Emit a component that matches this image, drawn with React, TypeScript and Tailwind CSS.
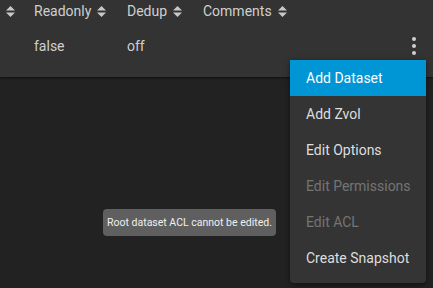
function SortIcon() {
  return (
    <svg className="h-[11px] w-[9px] shrink-0" viewBox="0 0 9 11" fill="#c8c8c8" aria-hidden="true">
      <path d="M4.5 0L9 4.5H0z" />
      <path d="M4.5 11L0 6.5h9z" />
    </svg>
  )
}

const menuItems = [
  { label: 'Add Dataset', active: true },
  { label: 'Add Zvol' },
  { label: 'Edit Options' },
  { label: 'Edit Permissions', disabled: true },
  { label: 'Edit ACL', disabled: true },
  { label: 'Create Snapshot' }
]

export default function App() {
  return (
    <div
      className="relative h-[288px] w-[433px] overflow-hidden bg-[#222222] text-[14px] text-[#cfcfcf]"
      style={{ fontFamily: 'Roboto, "Liberation Sans", sans-serif' }}
    >
      {/* таблица */}
      <div className="h-[77px] bg-[#333333] shadow-[0_1px_2px_rgba(0,0,0,0.6)]">
        <div className="flex h-[22px] items-center">
          <div className="flex w-[34px] pl-[6px]">
            <SortIcon />
          </div>
          <div className="flex w-[93px] items-center gap-[6px]">
            <span>Readonly</span>
            <SortIcon />
          </div>
          <div className="flex w-[76px] items-center gap-[6px]">
            <span>Dedup</span>
            <SortIcon />
          </div>
          <div className="flex items-center gap-[6px]">
            <span>Comments</span>
            <SortIcon />
          </div>
        </div>
        <div className="flex h-[48px] items-center">
          <div className="w-[34px]" />
          <div className="w-[93px]">false</div>
          <div className="w-[76px]">off</div>
          <div className="flex-1" />
          <div className="mr-[17px] flex flex-col items-center gap-[3px] pb-[1px]">
            <span className="h-[4px] w-[4px] rounded-full bg-[#d0d0d0]" />
            <span className="h-[4px] w-[4px] rounded-full bg-[#d0d0d0]" />
            <span className="h-[4px] w-[4px] rounded-full bg-[#d0d0d0]" />
          </div>
        </div>
      </div>

      {/* меню */}
      <div className="absolute left-[290px] top-[60px] w-[136px] rounded-b-[4px] bg-[#343434] pb-[7px] shadow-[0_2px_6px_rgba(0,0,0,0.5)]">
        {menuItems.map((item) => (
          <div
            key={item.label}
            className={
              item.active
                ? 'flex h-[36px] items-center bg-[#0095d5] pl-[16px] text-white'
                : item.disabled
                  ? 'flex h-[36px] items-center pl-[16px] text-[#747474]'
                  : 'flex h-[36px] items-center pl-[16px] text-[#dedede]'
            }
          >
            {item.label}
          </div>
        ))}
      </div>

      {/* подсказка */}
      <div className="absolute left-[103px] top-[209px] flex h-[27px] w-[173px] items-center justify-center rounded-[4px] bg-[#5f5f5f] text-[10.5px] text-[#f0f0f0]">
        Root dataset ACL cannot be edited.
      </div>
    </div>
  )
}
